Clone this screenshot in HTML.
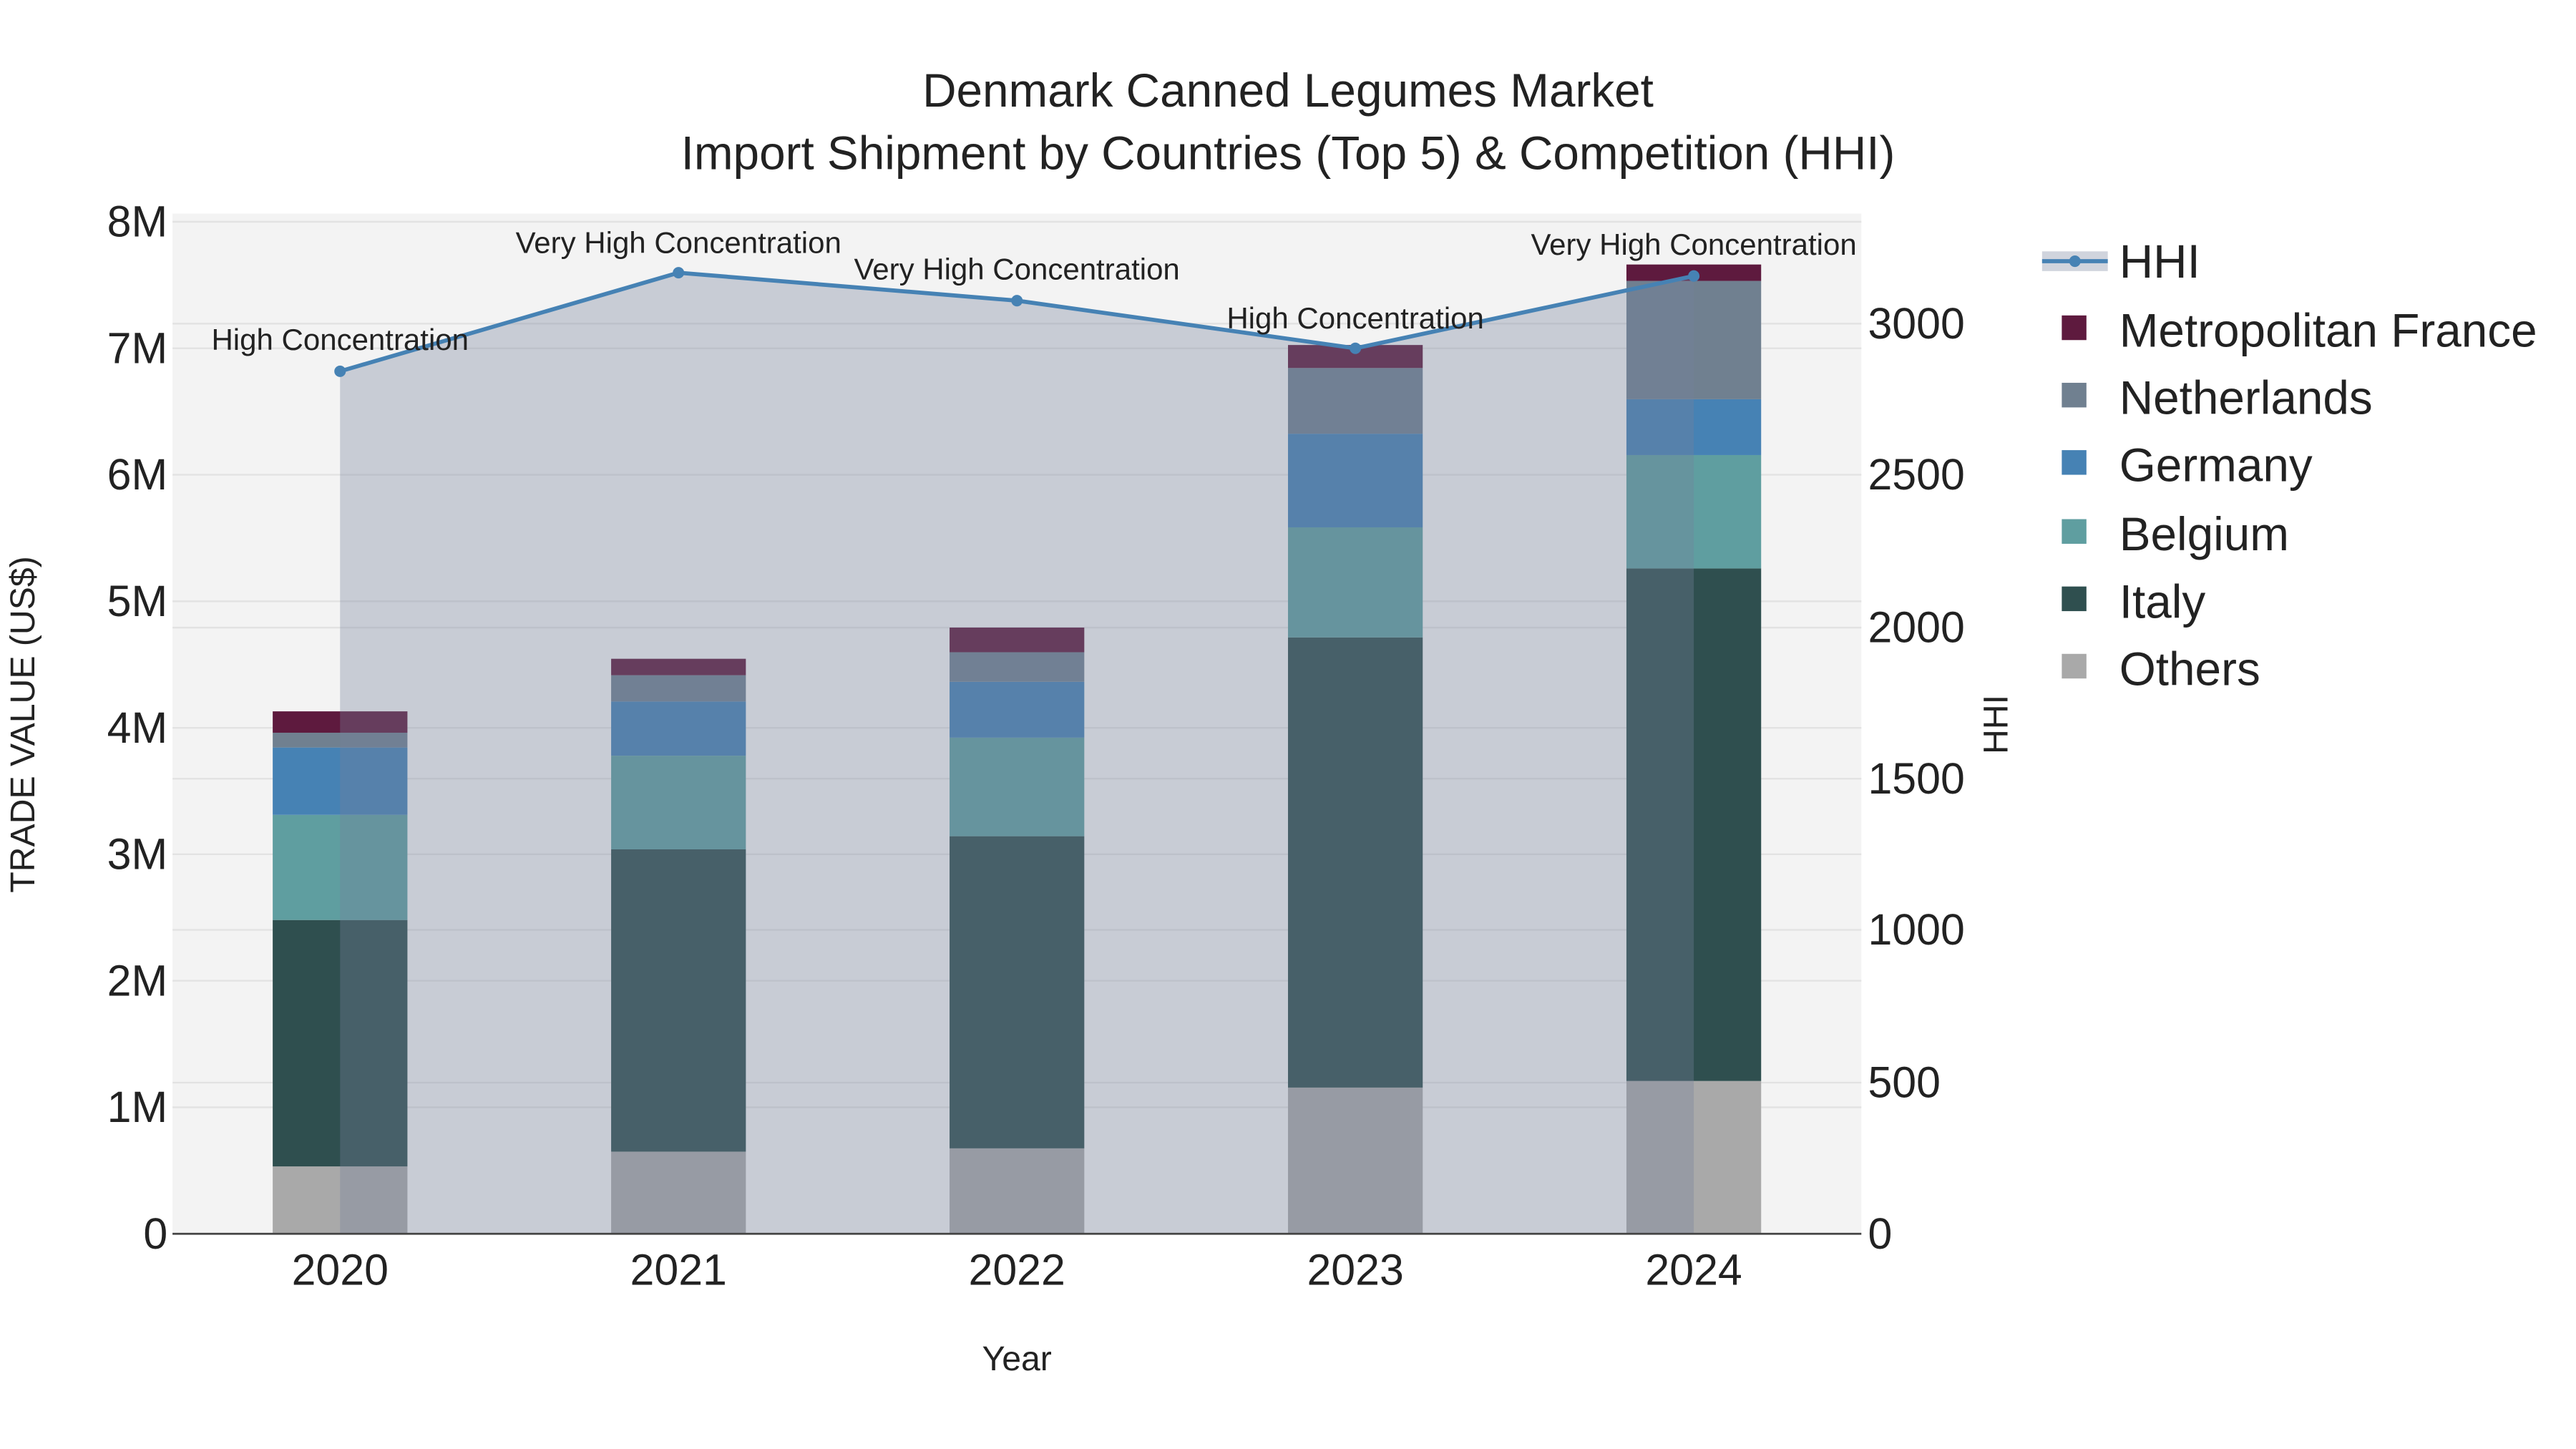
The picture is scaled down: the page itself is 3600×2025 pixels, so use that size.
<!DOCTYPE html>
<html><head><meta charset="utf-8"><style>
html,body{margin:0;padding:0;background:#fff;}
svg{display:block;}
text{font-family:"Liberation Sans",sans-serif;fill:#222;}
</style></head><body>
<svg width="3600" height="2025" viewBox="0 0 1568 882" preserveAspectRatio="xMinYMin meet" xmlns="http://www.w3.org/2000/svg">
<rect x="0" y="0" width="1568" height="882" fill="#fff"/>
<rect x="105" y="130" width="1028" height="621" fill="#f3f3f3"/>
<g stroke="#e2e2e2" stroke-width="1">
<line x1="105" x2="1133" y1="674" y2="674"/><line x1="105" x2="1133" y1="597" y2="597"/>
<line x1="105" x2="1133" y1="520" y2="520"/><line x1="105" x2="1133" y1="443" y2="443"/>
<line x1="105" x2="1133" y1="366" y2="366"/><line x1="105" x2="1133" y1="289" y2="289"/>
<line x1="105" x2="1133" y1="212" y2="212"/><line x1="105" x2="1133" y1="135" y2="135"/>
<line x1="105" x2="1133" y1="659" y2="659"/><line x1="105" x2="1133" y1="566" y2="566"/>
<line x1="105" x2="1133" y1="474" y2="474"/><line x1="105" x2="1133" y1="382" y2="382"/>
<line x1="105" x2="1133" y1="197" y2="197"/>
</g>
<g>
<rect x="166" y="710" width="82" height="41" fill="#a9a9a9"/>
<rect x="166" y="560" width="82" height="150" fill="#2f4f4f"/>
<rect x="166" y="496" width="82" height="64" fill="#5f9ea0"/>
<rect x="166" y="455" width="82" height="41" fill="#4682b4"/>
<rect x="166" y="446" width="82" height="9" fill="#708090"/>
<rect x="166" y="433" width="82" height="13" fill="#5e1a3e"/>
<rect x="372" y="701" width="82" height="50" fill="#a9a9a9"/>
<rect x="372" y="517" width="82" height="184" fill="#2f4f4f"/>
<rect x="372" y="460" width="82" height="57" fill="#5f9ea0"/>
<rect x="372" y="427" width="82" height="33" fill="#4682b4"/>
<rect x="372" y="411" width="82" height="16" fill="#708090"/>
<rect x="372" y="401" width="82" height="10" fill="#5e1a3e"/>
<rect x="578" y="699" width="82" height="52" fill="#a9a9a9"/>
<rect x="578" y="509" width="82" height="190" fill="#2f4f4f"/>
<rect x="578" y="449" width="82" height="60" fill="#5f9ea0"/>
<rect x="578" y="415" width="82" height="34" fill="#4682b4"/>
<rect x="578" y="397" width="82" height="18" fill="#708090"/>
<rect x="578" y="382" width="82" height="15" fill="#5e1a3e"/>
<rect x="784" y="662" width="82" height="89" fill="#a9a9a9"/>
<rect x="784" y="388" width="82" height="274" fill="#2f4f4f"/>
<rect x="784" y="321" width="82" height="67" fill="#5f9ea0"/>
<rect x="784" y="264" width="82" height="57" fill="#4682b4"/>
<rect x="784" y="224" width="82" height="40" fill="#708090"/>
<rect x="784" y="210" width="82" height="14" fill="#5e1a3e"/>
<rect x="990" y="658" width="82" height="93" fill="#a9a9a9"/>
<rect x="990" y="346" width="82" height="312" fill="#2f4f4f"/>
<rect x="990" y="277" width="82" height="69" fill="#5f9ea0"/>
<rect x="990" y="243" width="82" height="34" fill="#4682b4"/>
<rect x="990" y="171" width="82" height="72" fill="#708090"/>
<rect x="990" y="161" width="82" height="10" fill="#5e1a3e"/>
</g>
<path d="M207,751 L207,226 L413,166 L619,183 L825,212 L1031,168 L1031,751 Z" fill="rgba(116,130,154,0.34)"/>
<polyline points="207,226 413,166 619,183 825,212 1031,168" fill="none" stroke="#4682b4" stroke-width="2.5"/>
<g fill="#4682b4"><circle cx="207" cy="226" r="3.5"/><circle cx="413" cy="166" r="3.5"/><circle cx="619" cy="183" r="3.5"/><circle cx="825" cy="212" r="3.5"/><circle cx="1031" cy="168" r="3.5"/></g>
<g font-size="18.3" text-anchor="middle">
<text x="207" y="213">High Concentration</text>
<text x="413" y="154">Very High Concentration</text>
<text x="619" y="170">Very High Concentration</text>
<text x="825" y="200">High Concentration</text>
<text x="1031" y="155">Very High Concentration</text>
</g>
<line x1="105" x2="1133" y1="751" y2="751" stroke="#444" stroke-width="1.2"/>
<g font-size="26.5" text-anchor="end">
<text x="102" y="760">0</text><text x="102" y="683">1M</text><text x="102" y="606">2M</text>
<text x="102" y="529">3M</text><text x="102" y="452">4M</text><text x="102" y="375">5M</text>
<text x="102" y="298">6M</text><text x="102" y="221">7M</text><text x="102" y="144">8M</text>
</g>
<g font-size="26.5" text-anchor="start">
<text x="1137" y="760">0</text><text x="1137" y="668">500</text><text x="1137" y="575">1000</text>
<text x="1137" y="483">1500</text><text x="1137" y="391">2000</text><text x="1137" y="298">2500</text>
<text x="1137" y="206">3000</text>
</g>
<g font-size="26.5" text-anchor="middle">
<text x="207" y="782">2020</text><text x="413" y="782">2021</text><text x="619" y="782">2022</text>
<text x="825" y="782">2023</text><text x="1031" y="782">2024</text>
</g>
<text x="619" y="834" font-size="21" text-anchor="middle">Year</text>
<text transform="translate(21,441) rotate(-90)" font-size="21" text-anchor="middle">TRADE VALUE (US$)</text>
<text transform="translate(1222,441) rotate(-90)" font-size="21" text-anchor="middle">HHI</text>
<text x="784" y="65" font-size="28.6" text-anchor="middle">Denmark Canned Legumes Market</text>
<text x="784" y="103" font-size="28.6" text-anchor="middle">Import Shipment by Countries (Top 5) &amp; Competition (HHI)</text>
<rect x="1243" y="153" width="40" height="12" fill="rgba(116,130,154,0.34)"/>
<line x1="1243" x2="1283" y1="159" y2="159" stroke="#4682b4" stroke-width="2.5"/>
<circle cx="1263" cy="159" r="3.5" fill="#4682b4"/>
<g>
<rect x="1255" y="192" width="15" height="15" fill="#5e1a3e"/>
<rect x="1255" y="233" width="15" height="15" fill="#708090"/>
<rect x="1255" y="274" width="15" height="15" fill="#4682b4"/>
<rect x="1255" y="316" width="15" height="15" fill="#5f9ea0"/>
<rect x="1255" y="357" width="15" height="15" fill="#2f4f4f"/>
<rect x="1255" y="398" width="15" height="15" fill="#a9a9a9"/>
</g>
<g font-size="28.6">
<text x="1290" y="169">HHI</text>
<text x="1290" y="211">Metropolitan France</text>
<text x="1290" y="252">Netherlands</text>
<text x="1290" y="293">Germany</text>
<text x="1290" y="335">Belgium</text>
<text x="1290" y="376">Italy</text>
<text x="1290" y="417">Others</text>
</g>
</svg>
</body></html>
